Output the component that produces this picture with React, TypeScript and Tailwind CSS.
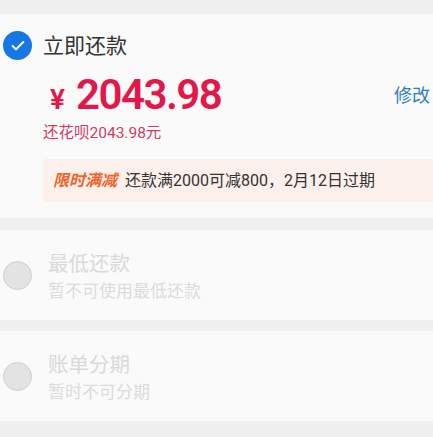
import { Check } from "lucide-react";

const font = { fontFamily: 'Roboto, "Noto Sans CJK SC", sans-serif' };

function Radio({ on }: { on?: boolean }) {
  if (on) {
    return (
      <div className="w-[29px] h-[29px] rounded-full bg-[#1677e5] flex items-center justify-center shrink-0">
        <Check className="w-[16px] h-[16px] text-white" strokeWidth={3} />
      </div>
    );
  }
  return <div className="w-[29px] h-[29px] rounded-full bg-[#e3e3e3] border border-[#cfcfcf] shrink-0" />;
}

function Disabled({ title, sub }: { title: string; sub: string }) {
  return (
    <div className="bg-[#fafafa] h-[90px] flex items-center pl-[3px]">
      <Radio />
      <div className="ml-[16px] flex flex-col pt-[2px]">
        <span className="text-[20.5px] leading-[28px] text-[#d9d9d9]">{title}</span>
        <span className="text-[17px] leading-[22px] mt-[2px] text-[#dcdcdc]">{sub}</span>
      </div>
    </div>
  );
}

export default function App() {
  return (
    <div className="w-[433px] h-[437px] bg-[#f0f0f0] overflow-hidden pt-[14px]" style={font}>
      <div className="bg-[#fafafa] h-[204px] pl-[3px] pt-[17px]">
        <div className="flex items-center">
          <Radio on />
          <span className="ml-[11px] text-[21px] leading-[28px] text-[#333]">立即还款</span>
        </div>
        <div className="flex items-center justify-between mt-[12px] h-[46px] pl-[47px] pr-[3px]">
          <div className="flex items-baseline text-[#e3174a] font-semibold">
            <span className="text-[28px] leading-none">¥</span>
            <span className="ml-[11px] text-[42px] leading-[46px] tracking-[-1.5px]">2043.98</span>
          </div>
          <span className="text-[18px] text-[#2e7fc0]">修改</span>
        </div>
        <div className="pl-[40px] mt-[5px] text-[15.5px] leading-[21px] text-[#cf3d5e]">还花呗2043.98元</div>
        <div className="ml-[40px] mt-[15px] h-[43px] bg-[#fbf0ec] flex items-center pl-[10px] rounded-l-[3px]">
          <span className="text-[16px] font-bold italic text-[#f0632a]">限时满减</span>
          <span className="ml-[8px] text-[16px] text-[#333]">还款满2000可减800，2月12日过期</span>
        </div>
      </div>
      <div className="h-[12px]" />
      <Disabled title="最低还款" sub="暂不可使用最低还款" />
      <div className="h-[11px]" />
      <Disabled title="账单分期" sub="暂时不可分期" />
    </div>
  );
}
